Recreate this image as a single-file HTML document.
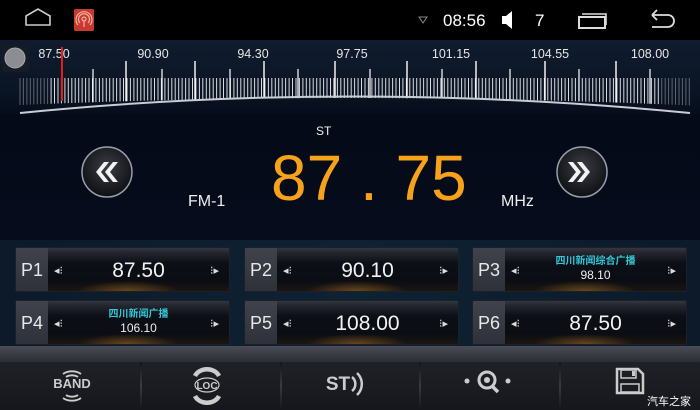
<!DOCTYPE html>
<html><head><meta charset="utf-8"><style>
*{margin:0;padding:0;box-sizing:border-box}
body{width:700px;height:410px;overflow:hidden;background:#050a16;font-family:"Liberation Sans","Noto Sans CJK SC",sans-serif;position:relative;color:#fff}
.abs{position:absolute}
#status{left:0;top:0;width:700px;height:40px;background:#000}
#scale{left:0;top:40px;width:700px;height:75px;background:linear-gradient(#101c2e,#0a1424 70%,#060c1a)}
#main{left:0;top:115px;width:700px;height:125px;background:linear-gradient(#050a18,#060c1c)}
#presets{left:0;top:240px;width:700px;height:108px;background:linear-gradient(90deg,#0c1a2a,#0e2233 50%,#0c1a2a)}
.pb{position:absolute;width:215px;height:45px;border-radius:2px;background:linear-gradient(#33363f 0,#22252d 12%,#0d0f16 35%,#0b0d14 75%,#1a1510 100%);overflow:hidden;border:1px solid #1c2029}
.pb:after{content:"";position:absolute;left:60px;right:50px;bottom:0;height:10px;background:radial-gradient(ellipse at 50% 100%,rgba(200,130,40,.45),rgba(0,0,0,0) 70%)}
.pl{position:absolute;left:0;top:0;width:32px;height:100%;background:linear-gradient(#40434c,#2e3139);font-size:18px;line-height:45px;text-align:center;color:#e8e8e8}
.fr{position:absolute;left:32px;right:0;top:0;text-align:center;font-size:21px;line-height:45px;color:#f2f2f2}
.fr2{position:absolute;left:32px;right:0;top:8px;text-align:center;font-size:12px;line-height:14px;color:#eee}
.fr2 b{display:block;font-weight:bold;color:#33c8d8;font-size:10px;line-height:12px}
.al,.ar{position:absolute;top:16px;font-size:11px;color:#ddd}
.al{left:38px}.ar{right:10px}
#bar{left:0;top:346px;width:700px;height:16px;background:linear-gradient(#4a4d56,#2b2d34)}
#bottom{left:0;top:362px;width:700px;height:48px;background:linear-gradient(#202127,#16171c)}
.sep{position:absolute;top:362px;width:2px;height:48px;background:linear-gradient(#15161a,#3a3b42,#15161a)}
</style></head><body>
<div id="status" class="abs">
<svg width="700" height="40" class="abs" style="left:0;top:0">
<path d="M26 25 V16 L38 9 L50 16 V25 Z" fill="none" stroke="#ccc" stroke-width="1.6"/>
<rect x="74" y="9" width="20" height="22" rx="2" fill="#c93a2e"/>
<circle cx="84" cy="19" r="2" fill="none" stroke="#f4b0a0" stroke-width="1.2"/>
<path d="M80 23a5.5 5.5 0 1 1 8 0M78 25a8 8 0 1 1 12 0M84 21v6" fill="none" stroke="#f4b0a0" stroke-width="1.2"/>
<path d="M419 17 L427 17 L423 23 Z" fill="none" stroke="#888" stroke-width="1"/>
<text x="443" y="26" font-size="17" fill="#fff" font-family="Liberation Sans">08:56</text>
<path d="M502 16h4l6-5v18l-6-5h-4z" fill="#fff"/>
<text x="535" y="26" font-size="17" fill="#fff" font-family="Liberation Sans">7</text>
<rect x="579" y="17" width="26" height="11" fill="none" stroke="#ddd" stroke-width="2"/>
<path d="M582 14h24v11" fill="none" stroke="#ddd" stroke-width="1.6"/>
<path d="M652 15h16a6 6 0 0 1 0 12h-16M652 15l5-5M652 15l5 5" fill="none" stroke="#ddd" stroke-width="1.8"/>
</svg></div>
<div id="scale" class="abs"><svg id="sv" width="700" height="75" style="position:absolute;left:0;top:0"></svg></div>
<div id="main" class="abs"></div>
<svg class="abs" style="left:0;top:115px" width="700" height="125">
<defs><radialGradient id="bg" cx="50%" cy="40%" r="60%"><stop offset="0" stop-color="#3a3d44"/><stop offset="1" stop-color="#0e0f13"/></radialGradient></defs>
<circle cx="107" cy="57" r="25" fill="url(#bg)" stroke="#9aa0a8" stroke-width="1.5"/>
<path d="M104 47l-8 10 8 10h5l-8-10 8-10zM113 47l-8 10 8 10h5l-8-10 8-10z" fill="#f2f2f2"/>
<circle cx="582" cy="57" r="25" fill="url(#bg)" stroke="#9aa0a8" stroke-width="1.5"/>
<path d="M577 47l8 10-8 10h5l8-10-8-10zM568 47l8 10-8 10h5l8-10-8-10z" fill="#f2f2f2"/>
</svg>
<div class="abs" style="left:316px;top:124px;font-size:12px;color:#eee">ST</div>
<div class="abs" style="left:188px;top:193px;font-size:16px;color:#eee">FM-1</div>
<div class="abs" style="left:501px;top:193px;font-size:16px;color:#eee">MHz</div>
<div class="abs" style="left:271px;top:143px;font-size:64px;line-height:70px;color:#f7a21b;letter-spacing:0;white-space:nowrap">87 . 75</div>
<div id="presets" class="abs"></div>
<div class="pb" style="left:15px;top:247px"><div class="pl">P1</div><span class="al">◂⁝</span><div class="fr">87.50</div><span class="ar">⁝▸</span></div>
<div class="pb" style="left:244px;top:247px"><div class="pl">P2</div><span class="al">◂⁝</span><div class="fr">90.10</div><span class="ar">⁝▸</span></div>
<div class="pb" style="left:472px;top:247px"><div class="pl">P3</div><span class="al">◂⁝</span><div class="fr2"><b>四川新闻综合广播</b>98.10</div><span class="ar">⁝▸</span></div>
<div class="pb" style="left:15px;top:300px"><div class="pl">P4</div><span class="al">◂⁝</span><div class="fr2"><b>四川新闻广播</b>106.10</div><span class="ar">⁝▸</span></div>
<div class="pb" style="left:244px;top:300px"><div class="pl">P5</div><span class="al">◂⁝</span><div class="fr">108.00</div><span class="ar">⁝▸</span></div>
<div class="pb" style="left:472px;top:300px"><div class="pl">P6</div><span class="al">◂⁝</span><div class="fr">87.50</div><span class="ar">⁝▸</span></div>
<div id="bar" class="abs"></div>
<div id="bottom" class="abs"></div>
<div class="sep" style="left:140px"></div><div class="sep" style="left:280px"></div><div class="sep" style="left:419px"></div><div class="sep" style="left:559px"></div>
<svg class="abs" style="left:0;top:362px" width="700" height="48">
<path d="M63 12a12 8 0 0 1 18 0M66 15a8 5 0 0 1 12 0M63 36a12 8 0 0 0 18 0M66 33a8 5 0 0 0 12 0" fill="none" stroke="#ccc" stroke-width="1.8"/>
<text x="72" y="26" text-anchor="middle" font-size="13" font-weight="bold" fill="#ccc" font-family="Liberation Sans">BAND</text>
<path d="M219 14a13 11 0 0 0-24 0M219 34a13 11 0 0 1-24 0" fill="none" stroke="#ccc" stroke-width="4.5"/>
<ellipse cx="207" cy="23" rx="12" ry="7" fill="none" stroke="#ccc" stroke-width="1.2"/>
<text x="207" y="27" text-anchor="middle" font-size="10" font-weight="bold" fill="#ccc" font-family="Liberation Sans">LOC</text>
<text x="338" y="28" text-anchor="middle" font-size="19" font-weight="bold" fill="#ccc" font-family="Liberation Sans">ST</text>
<path d="M352 15a9 9 0 0 1 0 14M357 11a15 15 0 0 1 0 22" fill="none" stroke="#ccc" stroke-width="2.5"/>
<circle cx="467" cy="19" r="2.5" fill="#ccc"/><circle cx="508" cy="19" r="2.5" fill="#ccc"/>
<circle cx="487" cy="18" r="8" fill="none" stroke="#ccc" stroke-width="3"/><circle cx="487" cy="18" r="3" fill="#ccc"/>
<path d="M492 24l6 6" stroke="#ccc" stroke-width="3.5"/>
<path d="M617 7h21l5 5v19h-26z" fill="none" stroke="#ccc" stroke-width="2.5"/>
<rect x="621" y="8" width="15" height="8" fill="none" stroke="#ccc" stroke-width="1.5"/><rect x="632" y="9" width="3" height="5" fill="#ccc"/>
<rect x="621" y="22" width="18" height="8" fill="none" stroke="#ccc" stroke-width="1.5"/>
</svg>
<div class="abs" style="left:647px;top:393px;font-size:11px;color:#fff">汽车之家</div>
<script>
var s=document.getElementById('sv'),h='';
function by(x){return 58+ (7/108900)*(x-350)*(x-350);}
h+='<rect x="2" y="5" width="27" height="27" rx="3" fill="#151c26"/><circle cx="15" cy="18" r="10" fill="#8a8d92" stroke="#aaa"/>';
var labs=[[54,'87.50'],[153,'90.90'],[253,'94.30'],[352,'97.75'],[451,'101.15'],[550,'104.55'],[650,'108.00']];
labs.forEach(function(l){h+='<text x="'+l[0]+'" y="18" text-anchor="middle" font-size="12.5" fill="#e6e6e6" font-family="Liberation Sans">'+l[1]+'</text>';});
for(var x=20;x<690;x+=3.45){var o=(x<50||x>660)?0.35:0.85;h+='<line x1="'+x.toFixed(1)+'" y1="38" x2="'+x.toFixed(1)+'" y2="'+by(x).toFixed(1)+'" stroke="#fff" stroke-opacity="'+o+'" stroke-width="1"/>';}
[126,195,264,335,407,476,545,616].forEach(function(x){h+='<line x1="'+x+'" y1="21" x2="'+x+'" y2="'+by(x)+'" stroke="#fff" stroke-width="1.4"/>';});
[93,162,230,298,370,442,510,579,650].forEach(function(x){h+='<line x1="'+x+'" y1="29" x2="'+x+'" y2="'+by(x)+'" stroke="#fff" stroke-width="1.2"/>';});
h+='<path d="M20 73 Q350 40 690 73" fill="none" stroke="#c8ccd6" stroke-width="2"/>';
h+='<line x1="62" y1="7" x2="62" y2="61" stroke="#e02020" stroke-width="2"/>';
s.innerHTML=h;
</script>
</body></html>
